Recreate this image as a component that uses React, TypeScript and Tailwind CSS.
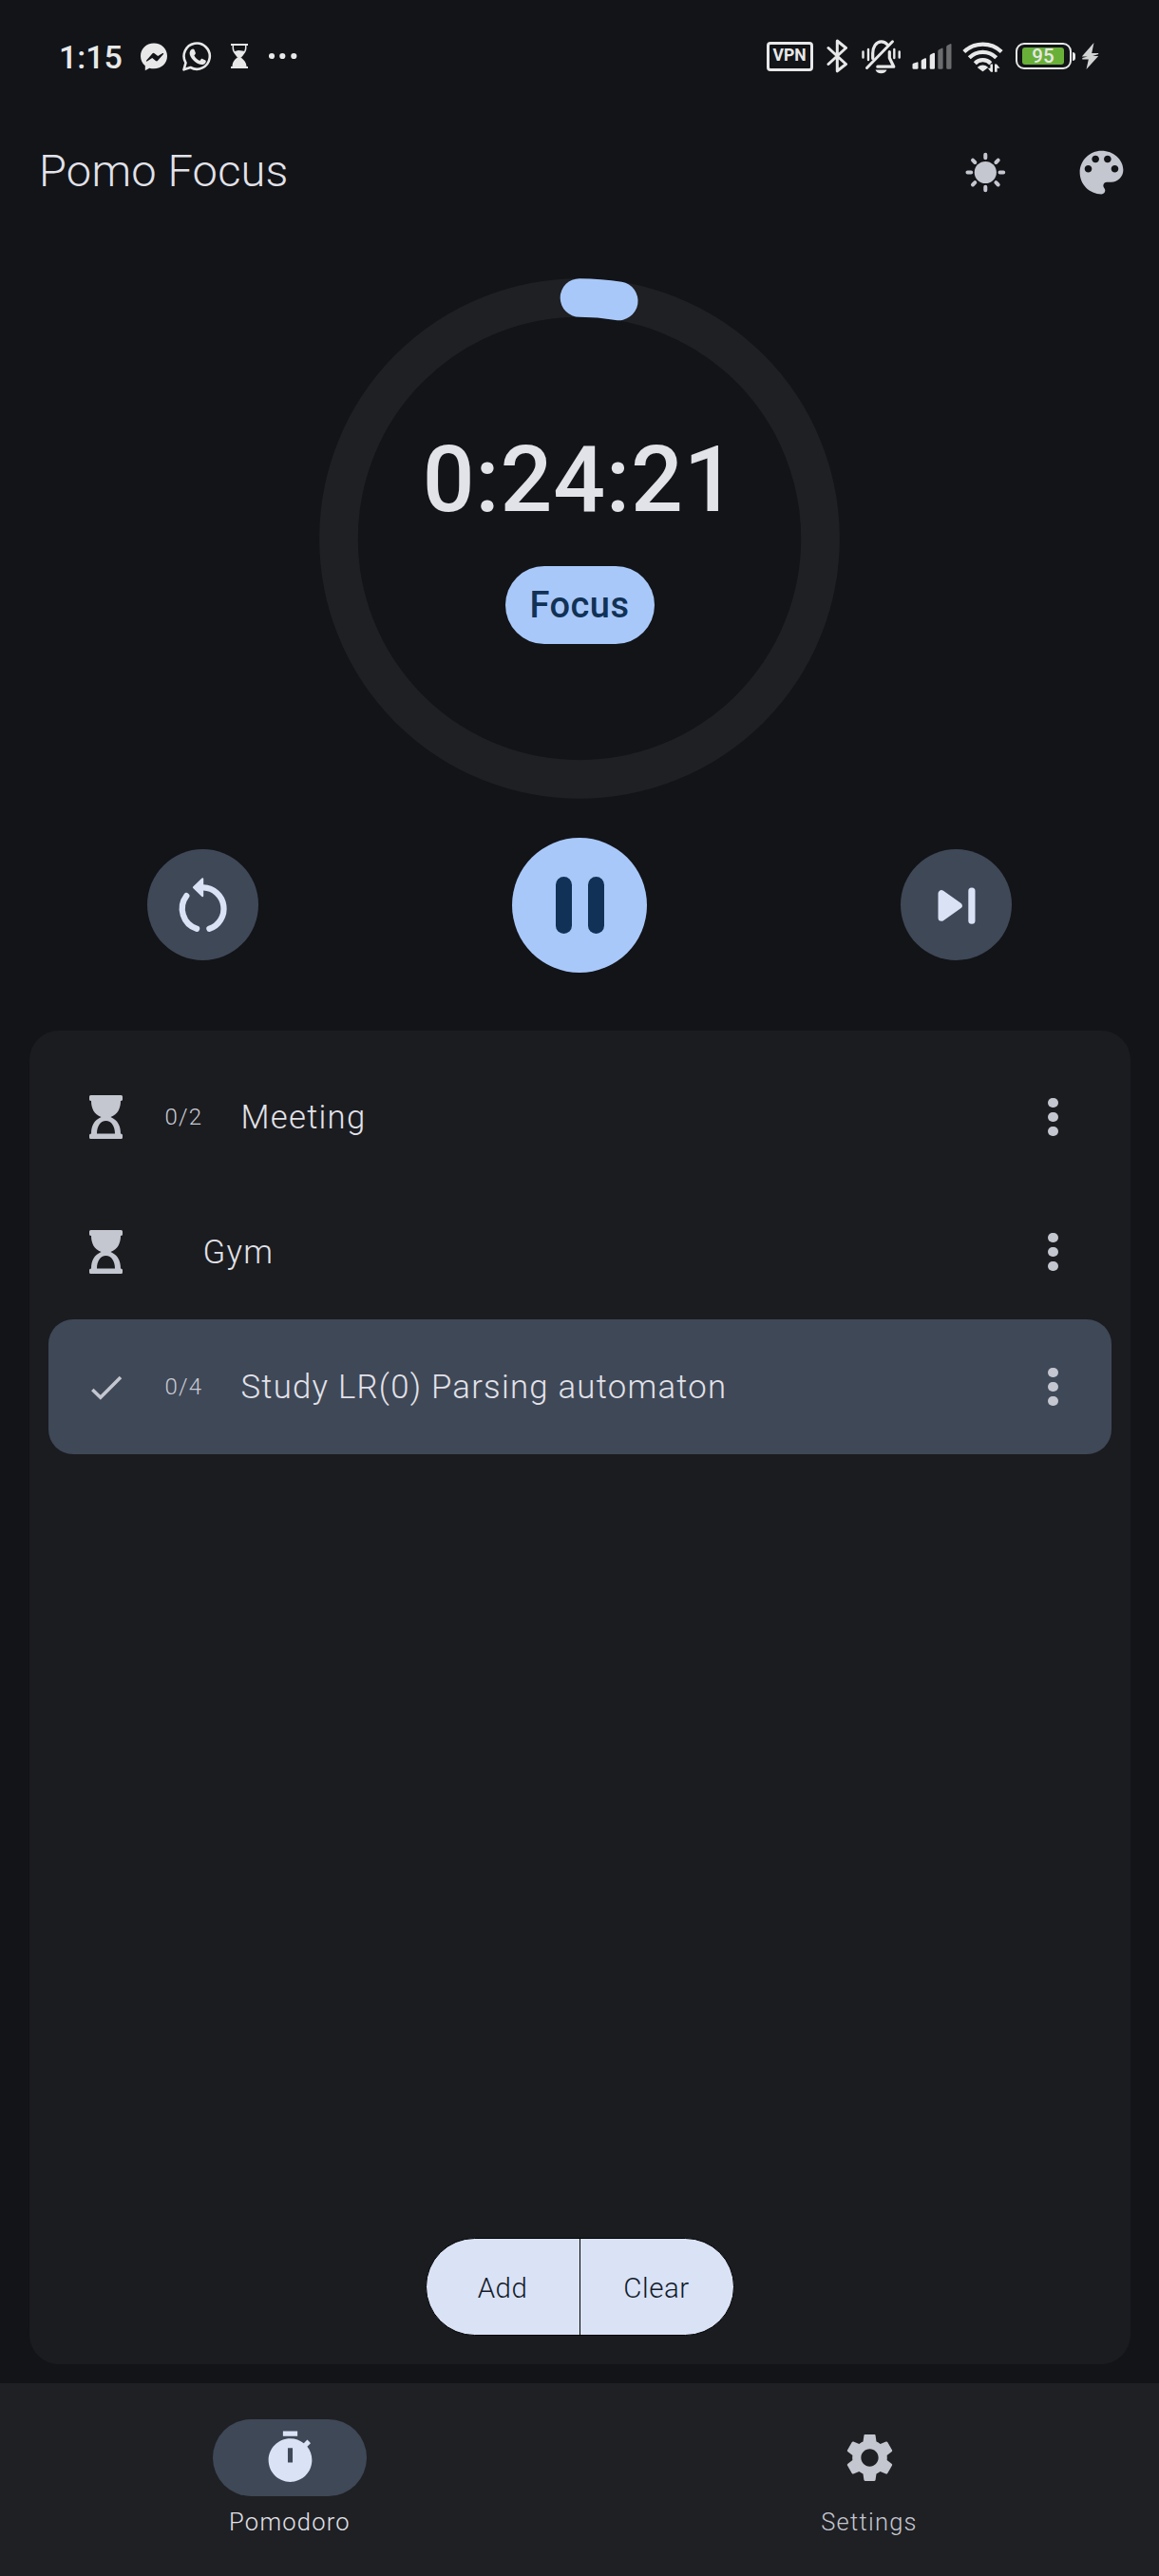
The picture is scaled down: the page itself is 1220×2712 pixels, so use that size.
import type { ReactNode } from "react";

type GlyphProps = { box: string; className: string; children: ReactNode };

function Glyph({ box, className, children }: GlyphProps) {
  return (
    <svg viewBox={box} className={`block shrink-0 ${className}`} fill="currentColor" aria-hidden="true">
      {children}
    </svg>
  );
}

function StatusBar() {
  return (
    <div className="flex h-[120px] items-start justify-between pt-10 pr-[63px] pl-[62px] text-[#e8e8e8]">
      <div className="flex h-10 items-center">
        <span className="w-[86px] text-[34px] leading-10 font-medium">1:15</span>
        <Glyph box="148 40 28 40" className="h-10 w-7">
          <path
            fillRule="evenodd"
            d="M162 45.5c-8.200 0-14 6-14 13.500 0 4.200 1.800 7.800 4.800 10.200v5l4.500-2.500c1.500.4 3 .6 4.700.6 8.200 0 14-6 14-13.300s-5.800-13.500-14-13.500zm-8 18.300 6.300-7.400a1.600 1.600 0 0 1 2.300-.2l3.600 2.900 5-3.100c.7-.3 1.200.3.8.9l-5.900 6.900a1.600 1.600 0 0 1-2.200.2l-3.700-2.900-5.300 3.500c-.7.400-1.300-.3-.9-.8z"
          />
        </Glyph>
        <Glyph box="192 40 31 40" className="ml-4 h-10 w-[31px]">
          <path
            d="M193.500 73.300l2-7.200a13.600 13.600 0 1 1 5 4.900z"
            fill="none"
            stroke="currentColor"
            strokeWidth="2.600"
            strokeLinejoin="round"
          />
          <path d="M201.600 52.100c.8-.9 2.400-.9 2.900.2l1.300 3.100c.3.900-.1 1.500-1.400 3 1.300 2.500 3.300 4.400 6 5.500 1.500-1.900 1.900-2.300 2.700-2l3.200 1.600c.7.4.6 1.300.2 2.300-.6 1.400-2.600 2.500-4.500 2.300-6.500-.8-12.400-7.600-12.400-12 0-1.500.8-3 2-4z" />
        </Glyph>
        <Glyph box="243 40 18 40" className="ml-5 h-10 w-[18px]">
          <path d="M243 46h18v2h-18zM243 70h18v2h-18zM244.500 70.500c0-6 3-8 6-10.500l-3.500-4.500v-1.500l4-1 4 .5 3 .5-4.500 6.500c3 2.500 6 4.500 6 10z" />
          <path d="M245.300 48v3c0 4 3.200 6 5.200 9M258.700 48v3c0 4-3.200 6-5.200 9" fill="none" stroke="currentColor" strokeWidth="1.500" />
        </Glyph>
        <Glyph box="283 40 30 40" className="ml-[22px] h-10 w-[30px]">
          <circle cx="286" cy="59" r="3.100" />
          <circle cx="297.300" cy="59" r="3.100" />
          <circle cx="309.300" cy="59" r="3.100" />
        </Glyph>
      </div>

      <div className="flex h-10 items-center">
        <div className="mr-3.5 mb-0.5 flex h-[31px] w-[49px] items-center justify-center rounded-[4px] border-[3px] border-current text-[17.500px] leading-none font-bold">
          VPN
        </div>
        <Glyph box="870 40 23 40" className="h-10 w-[23px]">
          <path
            d="M872 50.500 890.500 67.500 881.300 74.800V43l9.200 7.500L872 67.500"
            fill="none"
            stroke="currentColor"
            strokeWidth="3"
            strokeLinejoin="round"
            strokeLinecap="round"
          />
        </Glyph>
        <Glyph box="906 40 43 40" className="ml-[13px] h-10 w-[43px]">
          <g fill="none" stroke="currentColor" strokeLinecap="round">
            <path d="M918.700 61.500v-5.500c0-6 3.300-12.200 9-12.200 2.600 0 5 1.300 6.500 3.300M936.300 54.500v6.500l4.500 9.200h-17" strokeWidth="3.200" strokeLinejoin="round" />
            <path d="M939.500 43.800 912.500 71.500" strokeWidth="3" />
            <path d="M908.500 54.500v6M914 52v11M946.700 54.500v6M941.300 52v9" strokeWidth="2.400" />
          </g>
          <path d="M921.500 73.500h12c-.7 2.300-3 3.700-6 3.700s-5.300-1.400-6-3.700z" />
        </Glyph>
        <Glyph box="960 40 42 40" className="ml-[11px] h-10 w-[42px]">
          <path d="M960.500 68q0-.8.800-1.200l4-1.400q1.200-.3 1.200.8v5.300q0 1.300-1.300 1.300h-3.400q-1.300 0-1.300-1.300z" />
          <path d="M969.700 64.300q0-1 1-1.500l3-1.500q1.300-.5 1.300.8v9.400q0 1.300-1.300 1.300h-2.700q-1.300 0-1.300-1.300zM978.700 58.800q0-1 1-1.500l3-1.500q1.300-.5 1.300.8v14.900q0 1.300-1.300 1.300h-2.700q-1.300 0-1.300-1.300z" />
          <path
            d="M987.300 53.700q0-1 1-1.500l3-1.500q1.300-.5 1.300.8v20q0 1.300-1.300 1.300h-2.700q-1.300 0-1.300-1.300zM996.200 49.200q0-1 1-1.500l3-1.500q1.300-.5 1.300.8v24.500q0 1.300-1.300 1.300h-2.700q-1.300 0-1.300-1.300z"
            opacity=".42"
          />
        </Glyph>
        <Glyph box="1013 40 43 40" className="ml-[11px] h-10 w-[43px]">
          <g fill="none" stroke="currentColor" strokeWidth="4.200">
            <path d="M1014.800 54.500a28.500 28.500 0 0 1 39.400 0" />
            <path d="M1020.300 60.700a20 20 0 0 1 28.400 0" />
            <path d="M1026.300 66.700a11.500 11.500 0 0 1 16.500 0" />
          </g>
          <path d="M1034.500 74.500 1029.800 71a7 7 0 0 1 9.400 0z" stroke="currentColor" strokeWidth="1.500" strokeLinejoin="round" />
          <path d="M1042.400 67.500h2.600v8.200h-2l-3.200-4h2.600zM1047 75.700v-8.200h2l3.500 4.200h-2.900v4z" />
        </Glyph>
        <div className="mb-0.5 ml-[13px] flex h-7 w-[59px] items-center justify-center rounded-[9px] border-[2.500px] border-current">
          <div className="flex h-[18px] w-[44px] items-center justify-center rounded-[3px] bg-[#69b039] text-[20.500px] leading-none font-medium">
            95
          </div>
        </div>
        <div className="mb-0.5 ml-[1px] h-[9px] w-[3.500px] rounded-r-sm bg-current" />
        <Glyph box="1138 40 19 40" className="ml-[6px] h-10 w-[19px]">
          <path d="M1151.500 45 1138.800 59.500h6l-5.500 1.500 0 1.500h6.500l-2.300 10.500 12.700-14h-6l6-2v-1h-7z" opacity=".9" />
        </Glyph>
      </div>
    </div>
  );
}

function AppBar() {
  return (
    <header className="flex h-[122px] items-center justify-between pr-[30px] pl-[41px]">
      <h1 className="mb-0.5 text-[47px] leading-[56px] font-light tracking-[0.200px] text-[#e2e2e9]">Pomo Focus</h1>
      <div className="flex items-center gap-[61px] text-[#c4c6d0]">
        <Glyph box="1007 150.500 61 61" className="size-[61px]">
          <circle cx="1037.300" cy="181" r="11.600" />
          <path
            d="M1037.300 162.200v3.500M1037.300 196.300v3.500M1018.500 181h3.700M1052.500 181h3.700M1024 168.200l2.300 2.300M1050.700 168.200l-2.300 2.300M1024 194l2.300-2.300M1050.700 194l-2.300-2.300"
            fill="none"
            stroke="currentColor"
            strokeWidth="4"
            strokeLinecap="round"
          />
        </Glyph>
        <Glyph box="0 0 24 24" className="size-[61px]">
          <path d="M12 3c-4.970 0-9 4.030-9 9s4.030 9 9 9c.83 0 1.500-.67 1.500-1.500 0-.39-.15-.74-.39-1.010-.23-.26-.38-.61-.38-.99 0-.83.67-1.500 1.500-1.500H16c2.760 0 5-2.240 5-5 0-4.420-4.030-8-9-8zm-5.500 9c-.83 0-1.500-.67-1.500-1.500S5.670 9 6.500 9 8 9.670 8 10.500 7.330 12 6.500 12zm3-4C8.670 8 8 7.330 8 6.500S8.670 5 9.500 5s1.500.67 1.500 1.500S10.330 8 9.500 8zm5 0c-.83 0-1.500-.67-1.500-1.500S13.670 5 14.500 5s1.500.67 1.500 1.500S15.330 8 14.500 8zm3 4c-.83 0-1.500-.67-1.500-1.500S16.670 9 17.500 9s1.500.67 1.500 1.500-.67 1.500-1.500 1.500z" />
        </Glyph>
      </div>
    </header>
  );
}

function Timer() {
  return (
    <section className="relative mx-auto mt-[51px] flex h-[548px] w-[548px] flex-col items-center">
      <svg viewBox="-274.500 -274.500 549 549" className="absolute inset-0 size-full" fill="none" aria-hidden="true">
        <circle r="254" stroke="#1f2024" strokeWidth="40.700" />
        <path d="M0-254A254 254 0 0 1 41.300-250.600" stroke="#a9c8fa" strokeWidth="40.700" strokeLinecap="round" />
      </svg>
      <div className="relative mt-[155px] text-[96.500px] leading-[114px] font-medium tracking-[0.800px] text-[#e2e2e9]">0:24:21</div>
      <div className="relative mt-[34px] flex h-[82px] w-[157px] items-center justify-center rounded-full bg-[#a9c8fa] text-[38px] leading-[44px] font-medium tracking-[0.500px] text-[#113256]">
        Focus
      </div>
    </section>
  );
}

function Controls() {
  return (
    <div className="mt-10 flex h-[143px] items-center justify-between px-[155px]">
      <button className="flex size-[117px] items-center justify-center rounded-full bg-[#3f4857] text-[#dae2f6]">
        <Glyph box="175.500 914.500 76 76" className="size-[76px]">
          <path
            d="M195.800 942.700A22.300 22.300 0 0 0 206.600 977.300M219.900 977.300A22.300 22.300 0 0 0 213.600 933.900H210"
            fill="none"
            stroke="currentColor"
            strokeWidth="6.300"
            strokeLinecap="round"
          />
          <path d="M203.400 933.700 212.700 924.700V942.700z" stroke="currentColor" strokeWidth="2" strokeLinejoin="round" />
        </Glyph>
      </button>
      <button className="flex size-[142px] items-center justify-center gap-[17px] rounded-full bg-[#a9c8fa]">
        <span className="h-[60px] w-[17px] rounded-full bg-[#113256]" />
        <span className="h-[60px] w-[17px] rounded-full bg-[#113256]" />
      </button>
      <button className="flex size-[117px] items-center justify-center rounded-full bg-[#3f4857] text-[#dae2f6]">
        <Glyph box="968.500 914.500 76 76" className="size-[76px]">
          <path d="M990.500 940.200V965.800L1008.800 953z" stroke="currentColor" strokeWidth="7" strokeLinejoin="round" />
          <rect x="1018.800" y="934" width="7.200" height="38.200" rx="3.500" />
        </Glyph>
      </button>
    </div>
  );
}

type Task = { name: string; count?: string; selected?: boolean };

const tasks: Task[] = [
  { name: "Meeting", count: "0/2" },
  { name: "Gym" },
  { name: "Study LR(0) Parsing automaton", count: "0/4", selected: true },
];

function TaskRow({ name, count, selected }: Task) {
  return (
    <li
      className={
        selected
          ? "flex h-[142px] items-center rounded-[26px] bg-[#3f4857] pr-[56px] pl-[41px]"
          : "flex h-[142px] items-center pr-[56px] pl-[41px]"
      }
    >
      {selected ? (
        <Glyph box="92 1441 38 38" className="size-[38px] text-[#c4c6d0]">
          <path d="M97.300 1463 105.800 1471.300 127 1450" fill="none" stroke="currentColor" strokeWidth="3.600" />
        </Glyph>
      ) : (
        <Glyph box="92 1151 38 48" className="h-12 w-[38px] text-[#c4c6d0]">
          <path
            fillRule="evenodd"
            d="M95.500 1152h32q1.500 0 1.500 1.500v3q0 1.500-2 1.500c0 8-3 14-10.500 17 7.500 3.500 10.500 9 10.500 17.500q2 0 2 1.500v2.500q0 1.500-1.500 1.500h-32q-1.500 0-1.500-1.500v-2.500q0-1.500 2-1.500c0-8.500 3-14 10.500-17.500-7.500-3-10.500-9-10.500-17q-2 0-2-1.500v-3q0-1.500 1.500-1.500zM102 1192.500h19c0-7.500-3.500-13.500-9.500-13.500s-9.500 6-9.500 13.500z"
          />
        </Glyph>
      )}
      {count ? (
        <span className="ml-11 w-20 shrink-0 text-[24px] leading-8 font-light tracking-[1.200px] text-[#c9cbd4]">{count}</span>
      ) : (
        <span className="w-[84px] shrink-0" />
      )}
      <span className="flex-1 text-[34.700px] leading-[42px] font-light tracking-[1.250px] text-[#e2e2e9]">{name}</span>
      <span className="flex flex-col gap-[5px] text-[#c4c6d0]">
        <span className="size-[10.300px] rounded-full bg-current" />
        <span className="size-[10.300px] rounded-full bg-current" />
        <span className="size-[10.300px] rounded-full bg-current" />
      </span>
    </li>
  );
}

function TaskPanel() {
  return (
    <section className="mx-[30.500px] mt-[61px] flex h-[1404px] flex-col rounded-[31px] bg-[#1b1c20] px-5 pt-5 pb-[30px]">
      <ul>
        {tasks.map((task) => (
          <TaskRow key={task.name} {...task} />
        ))}
      </ul>
      <div className="mx-auto mt-auto flex h-[103px] w-[325px] overflow-hidden rounded-full border border-black bg-[#dae2f6] text-[29.500px] font-[350] tracking-[0.500px] text-[#131c2b]">
        <button className="flex w-[162px] items-center justify-center border-r border-black pt-1">Add</button>
        <button className="flex flex-1 items-center justify-center pt-1">Clear</button>
      </div>
    </section>
  );
}

function BottomNav() {
  return (
    <nav className="mt-5 flex h-[203px] bg-[#1f2024] pt-[38px] text-[25.500px] leading-8">
      <div className="flex w-1/2 flex-col items-center text-[#e2e2e9]">
        <span className="flex h-[81px] w-[162px] items-center justify-center rounded-full bg-[#3f4857] text-[#dae2f6]">
          <Glyph box="0 0 24 24" className="size-[61px]">
            <path
              fillRule="evenodd"
              d="M15 1H9v2h6V1zm-4 13h2V8h-2v6zm8.030-6.610l1.420-1.420c-.43-.51-.9-.99-1.410-1.410l-1.420 1.420C16.070 4.740 14.120 4 12 4c-4.970 0-9 4.030-9 9s4.020 9 9 9 9-4.030 9-9c0-2.120-.74-4.070-1.970-5.610z"
            />
          </Glyph>
        </span>
        <span className="mt-[11px] font-[350] tracking-[1.250px]">Pomodoro</span>
      </div>
      <div className="flex w-1/2 flex-col items-center text-[#c4c6d0]">
        <span className="flex h-[81px] w-[162px] items-center justify-center">
          <Glyph box="0 0 24 24" className="size-[61px]">
            <path d="M19.140 12.940c.04-.3.06-.61.06-.94 0-.32-.02-.64-.07-.94l2.030-1.580c.18-.14.23-.41.12-.61l-1.920-3.320c-.12-.22-.37-.29-.59-.22l-2.390.96c-.5-.38-1.030-.7-1.620-.94l-.36-2.540c-.04-.24-.24-.41-.48-.41h-3.840c-.24 0-.43.17-.47.41l-.36 2.540c-.59.24-1.130.57-1.620.94l-2.390-.96c-.22-.08-.47 0-.59.22L2.740 8.870c-.12.21-.08.47.12.61l2.030 1.580c-.05.3-.09.63-.09.94s.02.64.07.94l-2.030 1.580c-.18.14-.23.41-.12.61l1.920 3.320c.12.22.37.29.59.22l2.390-.96c.5.38 1.030.7 1.620.94l.36 2.540c.05.24.24.41.48.41h3.840c.24 0 .44-.17.47-.41l.36-2.540c.59-.24 1.130-.56 1.620-.94l2.390.96c.22.08.47 0 .59-.22l1.920-3.320c.12-.22.07-.47-.12-.61l-2.010-1.580zM12 15.600c-1.980 0-3.600-1.620-3.600-3.600s1.620-3.600 3.600-3.600 3.600 1.620 3.600 3.600-1.620 3.600-3.600 3.600z" />
          </Glyph>
        </span>
        <span className="mt-[11px] font-[350] tracking-[1.250px]">Settings</span>
      </div>
    </nav>
  );
}

export default function App() {
  return (
    <main className="flex h-[2712px] w-[1220px] flex-col overflow-hidden bg-[#121418] font-[Roboto,sans-serif]">
      <StatusBar />
      <AppBar />
      <Timer />
      <Controls />
      <TaskPanel />
      <BottomNav />
    </main>
  );
}
